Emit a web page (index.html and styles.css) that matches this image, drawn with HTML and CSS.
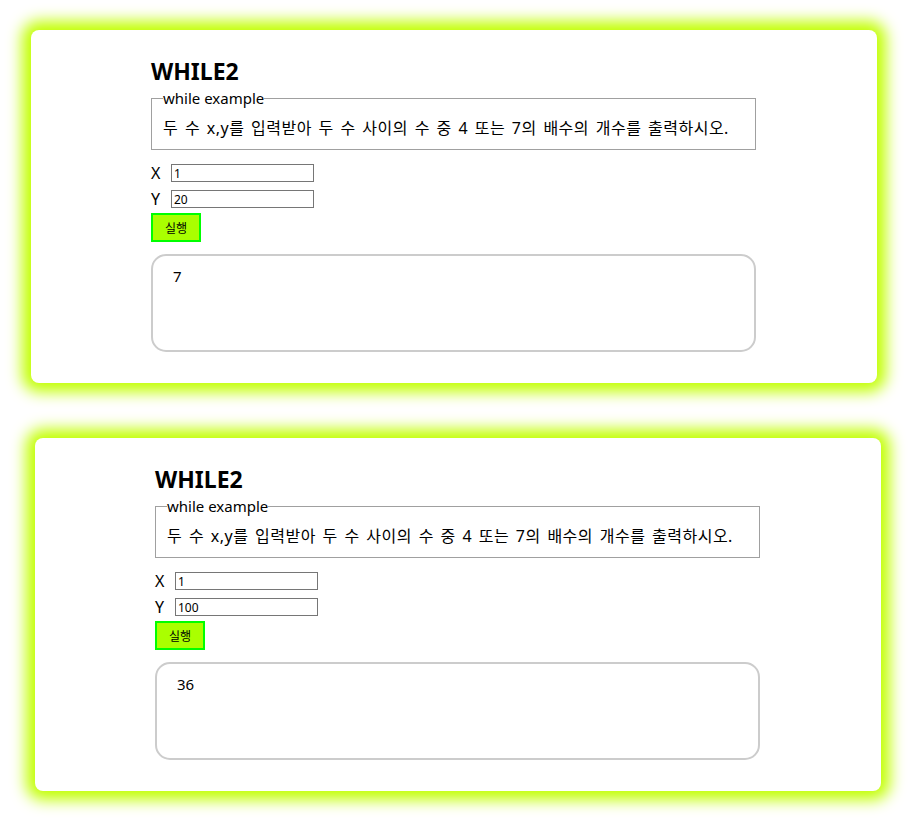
FILE: index.html
```html
<!DOCTYPE html>
<html lang="ko">
<head>
<meta charset="utf-8">
<title>WHILE2</title>
<link rel="stylesheet" href="styles.css">
</head>
<body>
<div class="card">
  <div class="content">
    <h2 class="title">WHILE2</h2>
    <fieldset class="box">
      <legend class="legend">while example</legend>
      <p class="desc">두 수 x,y를 입력받아 두 수 사이의 수 중 4 또는 7의 배수의 개수를 출력하시오.</p>
    </fieldset>
    <div class="row first"><label class="lbl">X</label><input class="inp" type="text" value="1"></div>
    <div class="row"><label class="lbl">Y</label><input class="inp" type="text" value="20"></div>
    <button class="run">실행</button>
    <div class="result">7</div>
  </div>
</div>
<div class="card second">
  <div class="content">
    <h2 class="title">WHILE2</h2>
    <fieldset class="box">
      <legend class="legend">while example</legend>
      <p class="desc">두 수 x,y를 입력받아 두 수 사이의 수 중 4 또는 7의 배수의 개수를 출력하시오.</p>
    </fieldset>
    <div class="row first"><label class="lbl">X</label><input class="inp" type="text" value="1"></div>
    <div class="row"><label class="lbl">Y</label><input class="inp" type="text" value="100"></div>
    <button class="run">실행</button>
    <div class="result">36</div>
  </div>
</div>
</body>
</html>
```
FILE: styles.css
```css
html, body {
  margin: 0;
  padding: 0;
  background: #ffffff;
}
body {
  padding-top: 30px;
  font-family: "Noto Sans", "Noto Sans CJK KR", sans-serif;
  color: #000;
}
.card {
  width: 846px;
  margin: 0 0 55px 31px;
  background: #ffffff;
  border-radius: 8px;
  box-shadow: 0 0 15px 9px #c2ff00;
  padding: 27px 0 31px;
  box-sizing: border-box;
}
.card.second {
  margin-left: 35px;
}
.content {
  width: 605px;
  margin: 0 0 0 120px;
}
.title {
  margin: 0 0 3px;
  font-size: 23px;
  line-height: 28px;
  font-weight: bold;
}
.box {
  margin: 0;
  border: 1px solid #a0a0a0;
  padding: 9px 11px 10px 11px;
}
.legend {
  padding: 0;
  font-size: 15px;
  line-height: 20px;
}
.desc {
  margin: 0;
  font-size: 16px;
  line-height: 22px;
  letter-spacing: 0.5px;
  word-spacing: 2px;
  white-space: nowrap;
}
.row {
  display: flex;
  align-items: center;
  height: 18px;
  margin-top: 8px;
}
.row.first {
  margin-top: 14px;
}
.lbl {
  width: 20px;
  font-size: 16px;
  line-height: 18px;
}
.inp {
  width: 143px;
  height: 18px;
  box-sizing: border-box;
  border: 1px solid #767676;
  padding: 0 2px;
  margin: 0;
  font-family: "Noto Sans", sans-serif;
  font-size: 12px;
  color: #000;
  outline: none;
}
.run {
  display: block;
  margin-top: 5px;
  width: 50px;
  height: 29px;
  box-sizing: border-box;
  border: 2px solid #00ff00;
  background: #aaff00;
  font-family: "Noto Sans CJK KR", sans-serif;
  font-size: 12px;
  color: #000;
  padding: 0;
}
.result {
  margin-top: 12px;
  height: 98px;
  box-sizing: border-box;
  border: 2px solid #cccccc;
  border-radius: 15px;
  padding: 10px 20px;
  font-size: 15px;
  line-height: 20px;
}
```
